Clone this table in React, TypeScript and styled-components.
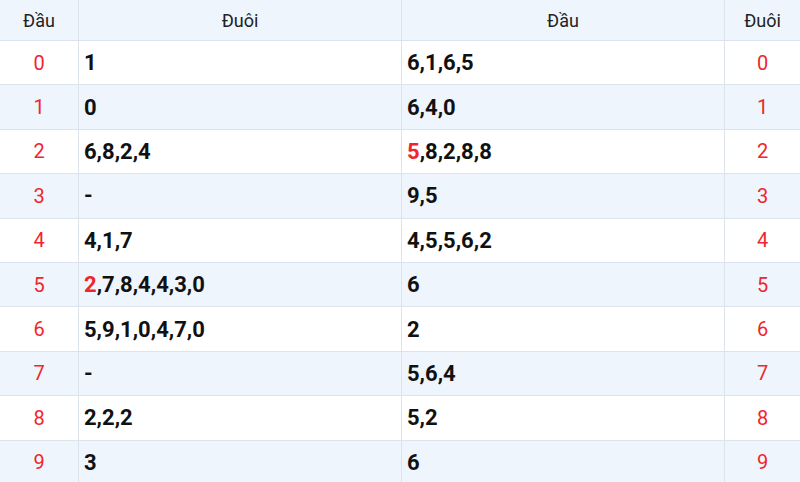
import React from 'react';
import styled, { createGlobalStyle } from 'styled-components';

const GlobalStyle = createGlobalStyle`
  html, body {
    margin: 0;
    padding: 0;
    background: #fff;
    font-family: Roboto, "Noto Sans", Arial, sans-serif;
  }
`;

const Table = styled.table`
  width: 801px;
  margin-left: -1px;
  border-collapse: collapse;
  table-layout: fixed;
`;

const HeadCell = styled.th`
  height: 40px;
  padding: 0;
  background: #eef5fd;
  border: 1px solid #dce3ea;
  border-top: none;
  color: #222;
  font-size: 18px;
  font-weight: 400;
  text-align: center;
`;

const Row = styled.tr<{ $alt: boolean }>`
  height: 44.4px;
  background: ${(p) => (p.$alt ? '#eef5fd' : '#fff')};
`;

const NumCell = styled.td`
  padding: 0;
  border: 1px solid #dce3ea;
  color: #f0262b;
  font-size: 20px;
  text-align: center;
`;

const ValueCell = styled.td`
  padding: 0 5px;
  border: 1px solid #dce3ea;
  color: #111;
  font-size: 22px;
  font-weight: 700;
  text-align: left;
`;

const Hot = styled.span`
  color: #f0262b;
`;

type Line = { n: number; tail: string; head: string; hotTail?: boolean; hotHead?: boolean };

const rows: Line[] = [
  { n: 0, tail: '1', head: '6,1,6,5' },
  { n: 1, tail: '0', head: '6,4,0' },
  { n: 2, tail: '6,8,2,4', head: '5,8,2,8,8', hotHead: true },
  { n: 3, tail: '-', head: '9,5' },
  { n: 4, tail: '4,1,7', head: '4,5,5,6,2' },
  { n: 5, tail: '2,7,8,4,4,3,0', head: '6', hotTail: true },
  { n: 6, tail: '5,9,1,0,4,7,0', head: '2' },
  { n: 7, tail: '-', head: '5,6,4' },
  { n: 8, tail: '2,2,2', head: '5,2' },
  { n: 9, tail: '3', head: '6' },
];

const Values: React.FC<{ text: string; hot?: boolean }> = ({ text, hot }) => {
  if (!hot) return <>{text}</>;
  const [first, ...rest] = text.split(',');
  return (
    <>
      <Hot>{first}</Hot>
      {rest.length ? ',' + rest.join(',') : ''}
    </>
  );
};

const App: React.FC = () => (
  <>
    <GlobalStyle />
    <Table>
      <colgroup>
        <col style={{ width: 79 }} />
        <col style={{ width: 323 }} />
        <col style={{ width: 323 }} />
        <col style={{ width: 76 }} />
      </colgroup>
      <thead>
        <tr>
          <HeadCell>Đầu</HeadCell>
          <HeadCell>Đuôi</HeadCell>
          <HeadCell>Đầu</HeadCell>
          <HeadCell>Đuôi</HeadCell>
        </tr>
      </thead>
      <tbody>
        {rows.map((r) => (
          <Row key={r.n} $alt={r.n % 2 === 1}>
            <NumCell>{r.n}</NumCell>
            <ValueCell>
              <Values text={r.tail} hot={r.hotTail} />
            </ValueCell>
            <ValueCell>
              <Values text={r.head} hot={r.hotHead} />
            </ValueCell>
            <NumCell>{r.n}</NumCell>
          </Row>
        ))}
      </tbody>
    </Table>
  </>
);

export default App;
